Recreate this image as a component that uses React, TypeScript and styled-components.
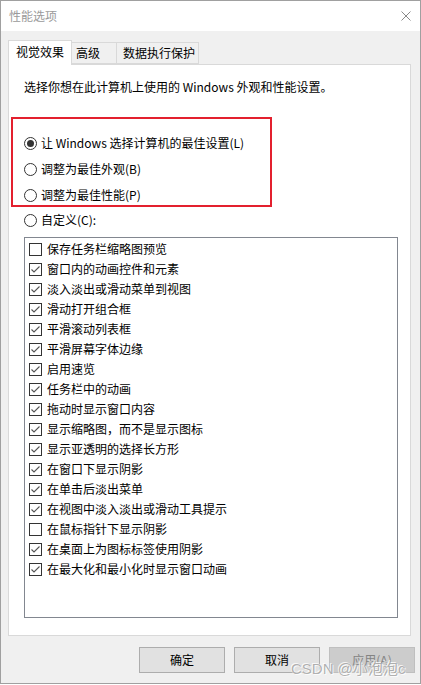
import React from "react";
import styled, { createGlobalStyle } from "styled-components";

const Global = createGlobalStyle`
  html, body { margin: 0; padding: 0; background: #ffffff; }
  body { font-family: "Noto Sans CJK SC", "Microsoft YaHei", sans-serif; font-size: 12px; color: #000; }
  * { box-sizing: border-box; }
`;

const Window = styled.div`
  position: relative;
  width: 421px;
  height: 684px;
  border: 1px solid #a0a0a0;
  display: flex;
  flex-direction: column;
  background: #f0f0f0;
`;

const TitleBar = styled.div`
  height: 30px;
  background: #ffffff;
  display: flex;
  align-items: center;
  justify-content: space-between;
  padding: 0 9px 0 8px;
`;

const Title = styled.span`
  color: #9a9a9a;
  font-size: 12px;
  line-height: 16px;
`;

const CloseBtn = styled.svg`
  width: 10px;
  height: 10px;
`;

const Body = styled.div`
  flex: 1;
  display: flex;
  flex-direction: column;
  padding: 9px 5px 0 7px;
`;

const TabStrip = styled.div`
  display: flex;
  align-items: flex-end;
  height: 24px;
  position: relative;
  z-index: 1;
`;

const Tab = styled.div<{ $active?: boolean; $w: number; $pl: number }>`
  width: ${(p) => p.$w}px;
  height: ${(p) => (p.$active ? "25px" : "22px")};
  margin-bottom: ${(p) => (p.$active ? "-1px" : "0")};
  padding: 0 0 ${(p) => (p.$active ? "2px" : "0")} ${(p) => p.$pl}px;
  background: ${(p) => (p.$active ? "#ffffff" : "#f0f0f0")};
  border: 1px solid #d9d9d9;
  border-bottom: ${(p) => (p.$active ? "none" : "1px solid #d9d9d9")};
  border-left: ${(p) => (p.$active ? "1px solid #d9d9d9" : "none")};
  display: flex;
  align-items: center;
  line-height: 16px;
  white-space: nowrap;
`;

const Panel = styled.div`
  width: 403px;
  height: 572px;
  background: #ffffff;
  border: 1px solid #d9d9d9;
  display: flex;
  flex-direction: column;
  padding: 13px 0 0 2px;
`;

const Desc = styled.div`
  padding-left: 13px;
  line-height: 18px;
`;

const Highlight = styled.div`
  margin-top: 21px;
  width: 261px;
  height: 90px;
  border: 2px solid #e3202e;
  padding: 14px 0 0 11px;
  display: flex;
  flex-direction: column;
  gap: 6px;
`;

const RadioRow = styled.div<{ $indent?: number }>`
  height: 20px;
  display: flex;
  align-items: center;
  gap: 4px;
  padding-left: ${(p) => p.$indent ?? 0}px;
  line-height: 16px;
`;

const RadioCircle = styled.span<{ $checked?: boolean }>`
  width: 13px;
  height: 13px;
  border-radius: 50%;
  border: 1px solid #333333;
  display: flex;
  align-items: center;
  justify-content: center;
  &::after {
    content: "";
    width: 7px;
    height: 7px;
    border-radius: 50%;
    background: ${(p) => (p.$checked ? "#333333" : "transparent")};
  }
`;

const CustomWrap = styled.div`
  margin-top: 3px;
`;

const ListBox = styled.div`
  margin: 7px 0 0 13px;
  width: 374px;
  height: 381px;
  border: 1px solid #828790;
  padding: 1px 0 0 4px;
  display: flex;
  flex-direction: column;
`;

const CheckRow = styled.div`
  height: 20px;
  display: flex;
  align-items: center;
  gap: 5px;
  line-height: 16px;
  white-space: nowrap;
`;

const CheckBox = styled.span`
  width: 13px;
  height: 13px;
  border: 1px solid #333333;
  background: #ffffff;
  display: flex;
  align-items: center;
  justify-content: center;
  flex: none;
`;

const Footer = styled.div`
  display: flex;
  justify-content: flex-end;
  gap: 9px;
  padding: 11px 0 0 0;
`;

const Button = styled.div<{ $disabled?: boolean }>`
  width: 86px;
  height: 26px;
  background: ${(p) => (p.$disabled ? "#cccccc" : "#e1e1e1")};
  border: 1px solid ${(p) => (p.$disabled ? "#bfbfbf" : "#adadad")};
  color: ${(p) => (p.$disabled ? "#838383" : "#000000")};
  display: flex;
  align-items: center;
  justify-content: center;
  line-height: 16px;
`;

const Watermark = styled.div`
  position: absolute;
  left: 290px;
  top: 656px;
  font-family: "Liberation Sans", "Noto Sans CJK SC", sans-serif;
  font-size: 15px;
  color: rgba(110, 110, 110, 0.55);
  text-shadow: 0 0 1px #fff, 1px 1px 0 rgba(255,255,255,0.8), -1px -1px 0 rgba(255,255,255,0.8);
  white-space: nowrap;
  pointer-events: none;
`;

const items: [string, boolean][] = [
  ["保存任务栏缩略图预览", false],
  ["窗口内的动画控件和元素", true],
  ["淡入淡出或滑动菜单到视图", true],
  ["滑动打开组合框", true],
  ["平滑滚动列表框", true],
  ["平滑屏幕字体边缘", true],
  ["启用速览", true],
  ["任务栏中的动画", true],
  ["拖动时显示窗口内容", true],
  ["显示缩略图，而不是显示图标", true],
  ["显示亚透明的选择长方形", true],
  ["在窗口下显示阴影", true],
  ["在单击后淡出菜单", true],
  ["在视图中淡入淡出或滑动工具提示", true],
  ["在鼠标指针下显示阴影", false],
  ["在桌面上为图标标签使用阴影", true],
  ["在最大化和最小化时显示窗口动画", true],
];

const Check = () => (
  <svg width="11" height="11" viewBox="0 0 11 11">
    <polyline points="1.5,5.5 4,8 9.5,2.5" fill="none" stroke="#555" strokeWidth="1.1" />
  </svg>
);

export default function App() {
  return (
    <>
      <Global />
      <Window>
        <TitleBar>
          <Title>性能选项</Title>
          <CloseBtn viewBox="0 0 10 10">
            <path d="M0.5 0.5 L9.5 9.5 M9.5 0.5 L0.5 9.5" stroke="#8a8a8a" strokeWidth="1" />
          </CloseBtn>
        </TitleBar>
        <Body>
          <TabStrip>
            <Tab $active $w={64} $pl={7}>视觉效果</Tab>
            <Tab $w={45} $pl={4}>高级</Tab>
            <Tab $w={82} $pl={6}>数据执行保护</Tab>
          </TabStrip>
          <Panel>
            <Desc>选择你想在此计算机上使用的 Windows 外观和性能设置。</Desc>
            <Highlight>
              <RadioRow>
                <RadioCircle $checked />
                让 Windows 选择计算机的最佳设置(L)
              </RadioRow>
              <RadioRow>
                <RadioCircle />
                调整为最佳外观(B)
              </RadioRow>
              <RadioRow>
                <RadioCircle />
                调整为最佳性能(P)
              </RadioRow>
            </Highlight>
            <CustomWrap>
              <RadioRow $indent={13}>
                <RadioCircle />
                自定义(C):
              </RadioRow>
            </CustomWrap>
            <ListBox>
              {items.map(([label, on]) => (
                <CheckRow key={label}>
                  <CheckBox>{on && <Check />}</CheckBox>
                  {label}
                </CheckRow>
              ))}
            </ListBox>
          </Panel>
          <Footer>
            <Button>确定</Button>
            <Button>取消</Button>
            <Button $disabled>应用(A)</Button>
          </Footer>
        </Body>
        <Watermark>CSDN @小泡泡c</Watermark>
      </Window>
    </>
  );
}
